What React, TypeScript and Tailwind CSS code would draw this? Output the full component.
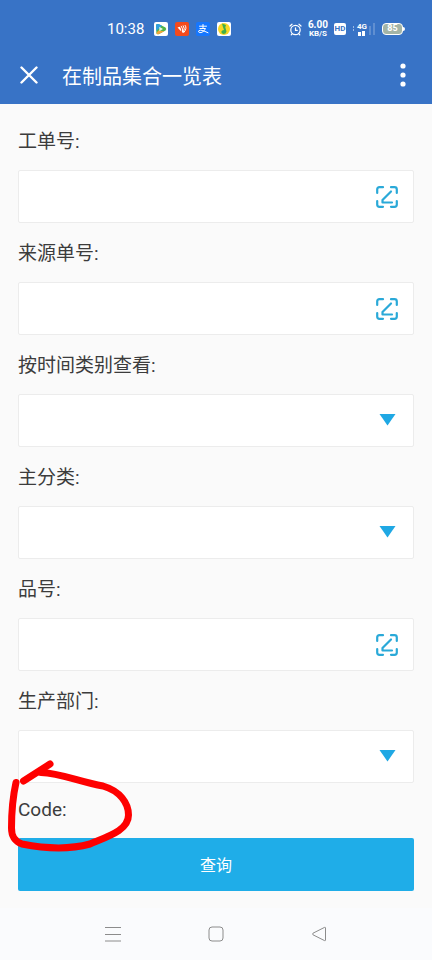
import React, { useState } from 'react';

type Field = {
  id: string;
  label: string;
  kind: 'scan' | 'select';
};

const fields: Field[] = [
  { id: 'workOrder', label: '工单号:', kind: 'scan' },
  { id: 'sourceOrder', label: '来源单号:', kind: 'scan' },
  { id: 'timeType', label: '按时间类别查看:', kind: 'select' },
  { id: 'mainCategory', label: '主分类:', kind: 'select' },
  { id: 'itemNo', label: '品号:', kind: 'scan' },
  { id: 'department', label: '生产部门:', kind: 'select' },
];

const StatusBar: React.FC = () => (
  <div className="flex h-[46px] items-center justify-between pt-3 pl-[107px] pr-[27px]">
    <div className="flex items-center gap-[7px]">
      <span className="mr-[3px] text-[15px] leading-none">10:38</span>

      {/* Video player */}
      <svg width="14" height="14" viewBox="0 0 14 14">
        <rect width="14" height="14" rx="2" fill="#fff" />
        <path d="M2 3Q2.500 1.500 4.500 2L11.500 5.500Q13 7 11.500 8.500L5 12Q2.800 12.700 2.400 11Z" fill="#4fb548" />
        <path d="M2 3Q2.500 1.500 4.500 2L8 3.800 2.300 9Z" fill="#2f9fe0" />
        <path d="M2.400 11l2-2.500 6 .7L5 12Q2.800 12.700 2.400 11Z" fill="#f2a53a" />
        <path d="M5.300 4.800L9 7l-3.700 2.200Z" fill="#e4f7df" />
      </svg>

      {/* Short video */}
      <svg width="14" height="14" viewBox="0 0 14 14">
        <rect width="14" height="14" rx="2" fill="#f44a1c" />
        <path d="M2.500 5.500L4.800 4.800Q6.500 7 6.300 9.500Z" fill="#fff" />
        <path d="M6.300 4.200Q8.300 6.800 7.600 10M8.300 3.800Q10.500 6.500 8.300 10.300M10.200 3.400Q12.500 6.500 8.800 10.500" fill="none" stroke="#fff" strokeLinecap="round" />
      </svg>

      {/* Payment */}
      <svg width="14" height="14" viewBox="0 0 14 14">
        <rect width="14" height="14" rx="2" fill="#1677ff" />
        <path d="M3.500 4.200h7M7 2.500v4M4 6.500h5.500Q8.500 9 6 10.300Q3.500 11.300 2.500 9.800Q2.300 8.200 4.800 8.200Q7.500 8.500 12 10.700" fill="none" stroke="#fff" strokeLinecap="round" />
      </svg>

      {/* Music */}
      <svg width="14" height="14" viewBox="0 0 14 14">
        <rect width="14" height="14" rx="2" fill="#fff" />
        <circle cx="7" cy="7" r="6" fill="#f8d824" />
        <path d="M5 1.500L9 3 8.300 5.200 9.500 9.500Q9 12 6.500 12Q4.200 11.600 4.300 9.700Q4.800 8 7 8L5.800 4.500Z" fill="#3fae49" />
      </svg>
    </div>

    <div className="flex items-center gap-[6px]">
      {/* Alarm */}
      <svg width="13" height="13" viewBox="0 0 13 13" fill="none" stroke="#fff" strokeWidth="1.200" strokeLinecap="round">
        <circle cx="6.500" cy="7" r="4.700" />
        <path d="M6.500 4.800v2.500h1.800M1 3L3 1.200M12 3L10 1.200M3 11l-.8.900M10 11l.8.900" />
      </svg>
      <div className="flex flex-col items-center font-bold">
        <span className="text-[10px] leading-[10px]">6.00</span>
        <span className="text-[8px] leading-[8px]">KB/S</span>
      </div>
      <span className="flex h-3 w-3 items-center justify-center rounded-xs bg-white text-[8px] font-bold text-[#3873c6]">HD</span>
      <div className="flex w-6 items-center justify-between">
        <svg width="3" height="6" viewBox="0 0 3 6" fill="#fff" opacity="0.5">
          <path d="M1 0h1v2H1zM1 3h1v2H1z" />
        </svg>
        <div className="flex flex-col items-center">
          <span className="text-[8px] leading-[8px] font-bold">4G</span>
          <svg width="9" height="5" viewBox="0 0 9 5" fill="#fff">
            <path d="M1 1h3v4H1zM5 0h3v5H5z" />
          </svg>
        </div>
        <svg width="7" height="12" viewBox="0 0 7 12" fill="#fff" opacity="0.2">
          <path d="M0 3h2v9H0zM4 0h2v12H4z" />
        </svg>
      </div>
      <div className="flex items-center">
        <span className="flex h-3 w-[21px] items-center justify-center rounded-[4px] border border-white bg-[#a3b4a6] text-[9px] font-bold">85</span>
        <span className="h-1 w-0.5 rounded-r-xs bg-white" />
      </div>
    </div>
  </div>
);

const ScanEditIcon: React.FC = () => (
  <svg width="22" height="22" viewBox="0 0 22 22" fill="none" stroke="#2aa9d8" strokeWidth="2.200" strokeLinecap="round" strokeLinejoin="round">
    <path d="M1.200 7V3.500Q1.200 1.200 3.500 1.200H7M15 1.200h3.500Q20.800 1.200 20.800 3.500V7M20.800 15v3.500Q20.800 20.800 18.500 20.800H15M7 20.800H3.500Q1.200 20.800 1.200 18.500V15" />
    <path d="M15 5.500L6.500 14v2.500H16" />
  </svg>
);

const FormField: React.FC<{ field: Field }> = ({ field }) => {
  const [value, setValue] = useState('');

  return (
    <div>
      <label htmlFor={field.id} className="flex h-[59px] items-center pt-1 text-[19px]">
        {field.label}
      </label>
      <div className="relative">
        {field.kind === 'scan' ? (
          <>
            <input
              id={field.id}
              type="text"
              value={value}
              onChange={(e) => setValue(e.target.value)}
              className="block h-[53px] w-full rounded-xs border border-[#ececec] bg-white pl-3 pr-14 text-base outline-none"
            />
            <button type="button" aria-label="扫描" className="absolute inset-y-0 right-4 flex items-center">
              <ScanEditIcon />
            </button>
          </>
        ) : (
          <>
            <select
              id={field.id}
              value={value}
              onChange={(e) => setValue(e.target.value)}
              className="block h-[53px] w-full appearance-none rounded-xs border border-[#ececec] bg-white pl-3 pr-14 text-base outline-none"
            >
              <option value=""></option>
            </select>
            <svg className="pointer-events-none absolute top-5 right-[18px]" width="17" height="12" viewBox="0 0 17 12">
              <path d="M.5 0h16L8.500 11.500Z" fill="#1fa8e4" />
            </svg>
          </>
        )}
      </div>
    </div>
  );
};

export default function App() {
  return (
    <div className="flex min-h-screen flex-col bg-[#fafafa] font-[Roboto,'Noto_Sans_CJK_SC',sans-serif] text-[#3c3c3c]">
      <header className="bg-[#3873c6] text-white">
        <StatusBar />
        <div className="flex h-[58px] items-center pl-5 pr-4">
          <button type="button" aria-label="关闭">
            <svg width="18" height="18" viewBox="0 0 18 18" stroke="#fff" strokeWidth="2.400" strokeLinecap="round">
              <path d="M1.500 1.500l15 15M16.500 1.500l-15 15" />
            </svg>
          </button>
          <h1 className="ml-6 flex-1 pt-1 text-xl">在制品集合一览表</h1>
          <button type="button" aria-label="更多" className="px-2">
            <svg width="10" height="24" viewBox="0 0 10 24" fill="#fff">
              <circle cx="5" cy="3" r="2.600" />
              <circle cx="5" cy="12" r="2.600" />
              <circle cx="5" cy="21" r="2.600" />
            </svg>
          </button>
        </div>
      </header>

      <form className="flex-1 px-[18px] pt-[7px] pb-4" onSubmit={(e) => e.preventDefault()}>
        {fields.map((field) => (
          <FormField key={field.id} field={field} />
        ))}

        <div className="relative flex h-[55px] items-center text-[19px]">
          Code:
          {/* Hand-drawn marker */}
          <svg className="pointer-events-none absolute -top-[33px] -left-[18px] z-10" width="150" height="150" viewBox="0 0 150 150" fill="none" stroke="#fe0000" strokeWidth="7" strokeLinecap="round" strokeLinejoin="round">
            <path d="M23.500 31L50 14" />
            <path d="M41 22.500C60 23 80 32 103 36C120 41 128.500 53 128.500 65C128.500 80 109 86 90 94C68 100 42 98 22 94C14 91 11.500 86 11.500 78C11.500 60 13 46 16 32.500" />
          </svg>
        </div>

        <button type="submit" className="block h-[53px] w-full rounded-xs bg-[#1fade8] pt-0.5 text-base text-white">
          查询
        </button>
      </form>

      <nav className="flex h-[52px] items-center justify-center gap-[87px] bg-[#fafbfd] text-[#8c8c8c]">
        <button type="button" aria-label="菜单">
          <svg width="16" height="16" viewBox="0 0 16 16" stroke="currentColor">
            <path d="M0 1.500h16M0 8.500h16M0 15h16" />
          </svg>
        </button>
        <button type="button" aria-label="主页">
          <svg width="16" height="16" viewBox="0 0 16 16" fill="none" stroke="currentColor">
            <rect x="1" y="1" width="14" height="14" rx="3" />
          </svg>
        </button>
        <button type="button" aria-label="返回">
          <svg width="16" height="16" viewBox="0 0 16 16" fill="none" stroke="currentColor" strokeLinejoin="round">
            <path d="M14.500 2v12q0 1-1 .6L2 8.800q-1-.8 0-1.600L13.500 1.400q1-.4 1 .6Z" />
          </svg>
        </button>
      </nav>
    </div>
  );
}
